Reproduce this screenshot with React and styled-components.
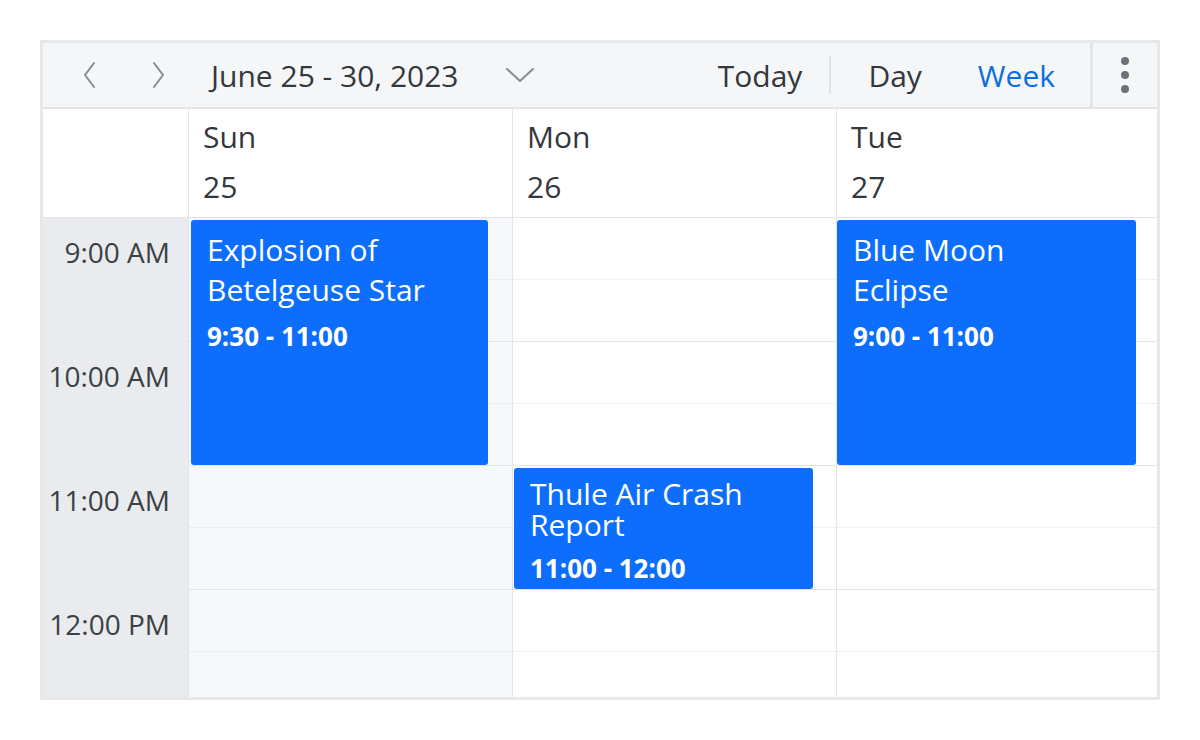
import styled, { createGlobalStyle } from 'styled-components'

const GlobalStyle = createGlobalStyle`
    body {
        margin: 0;
        background: #fff;
        font-family: 'Open Sans', 'Noto Sans', sans-serif;
        color: #34373c;
    }
`

const SLOT = 62
const LINE = '#e3e5e8'

const Page = styled.div`
    padding: 40px;
`

const Frame = styled.div`
    width: 1120px;
    height: 660px;
    box-sizing: border-box;
    border: 3px solid #e7e8ea;
    display: flex;
    flex-direction: column;
    overflow: hidden;
`

const Toolbar = styled.div`
    height: 64px;
    flex: none;
    display: flex;
    align-items: center;
    background: #f5f6f8;
    border-bottom: 2px solid ${LINE};
`

const NavGroup = styled.div`
    display: flex;
    align-items: center;
    gap: 42px;
    padding-left: 34px;
    height: 100%;
`

const IconButton = styled.div`
    display: flex;
    align-items: center;
    justify-content: center;
    width: 26px;
    height: 100%;
`

const DateText = styled.div`
    font-size: 30px;
    margin-left: 40px;
`

const Dropdown = styled.div`
    display: flex;
    align-items: center;
    margin-left: 46px;
`

const Spacer = styled.div`
    flex: 1;
`

const ViewButton = styled.div`
    font-size: 30px;
    padding: 0 ${p => p.$pr || 28}px 0 ${p => p.$pl || 28}px;
    color: ${p => (p.$active ? '#0a6fe3' : '#34373c')};
`

const Separator = styled.div`
    width: 2px;
    height: 38px;
    background: #e1e3e6;
`

const MenuArea = styled.div`
    width: 64px;
    height: 100%;
    border-left: 3px solid ${LINE};
    display: flex;
    align-items: center;
    justify-content: center;
`

const HeaderRow = styled.div`
    height: 108px;
    flex: none;
    display: grid;
    grid-template-columns: 145px 324px 324px 1fr;
    border-bottom: 1px solid ${LINE};
    background: #fff;
`

const Corner = styled.div``

const DayHead = styled.div`
    border-left: 1px solid ${LINE};
    padding: 3px 0 0 14px;
    font-size: 30px;
    line-height: 50px;
`

const Body = styled.div`
    flex: 1;
    display: grid;
    grid-template-columns: 145px 324px 324px 1fr;
    overflow: hidden;
`

const Gutter = styled.div`
    background: #e9ebee;
`

const TimeLabel = styled.div`
    height: ${SLOT * 2}px;
    box-sizing: border-box;
    padding: 3px 18px 0 0;
    line-height: ${SLOT}px;
    text-align: right;
    font-size: 28px;
    color: #3c4046;
`

const DayCol = styled.div`
    position: relative;
    border-left: 1px solid ${LINE};
    background: ${p => (p.$shaded ? '#f7f8fa' : '#fff')};
`

const Slot = styled.div`
    height: ${SLOT}px;
    box-sizing: border-box;
    border-bottom: 1px ${p => (p.$half ? 'dotted' : 'solid')} ${LINE};
`

const Event = styled.div`
    position: absolute;
    top: ${p => p.$start * SLOT + 2}px;
    left: ${p => p.$left}px;
    width: ${p => p.$width}px;
    height: ${p => p.$slots * SLOT - 3}px;
    box-sizing: border-box;
    background: #0d6efd;
    border-radius: 3px;
    color: #fff;
    padding: 10px 17px 10px 16px;
    overflow: hidden;
`

const EventTitle = styled.div`
    font-size: 30px;
    line-height: ${p => (p.$compact ? 31 : 40)}px;
`

const EventTime = styled.div`
    font-size: 26px;
    font-weight: 700;
    line-height: 32px;
    margin-top: ${p => (p.$compact ? 12 : 10)}px;
`

const Chevron = ({ dir }) => {
    const pts = {
        left: '12,2 3,14 12,26',
        right: '4,2 13,14 4,26',
        down: '2,3 15,15 28,3'
    }[dir]
    const down = dir === 'down'
    return (
        <svg width={down ? 30 : 16} height={down ? 18 : 28} viewBox={down ? '0 0 30 18' : '0 0 16 28'}>
            <polyline points={pts} fill="none" stroke="#868b92" strokeWidth="2" strokeLinecap="round" strokeLinejoin="round" />
        </svg>
    )
}

const Kebab = () => (
    <svg width="10" height="38" viewBox="0 0 10 38">
        <circle cx="5" cy="5" r="4" fill="#6b7079" />
        <circle cx="5" cy="19" r="4" fill="#6b7079" />
        <circle cx="5" cy="33" r="4" fill="#6b7079" />
    </svg>
)

const days = [
    { name: 'Sun', num: 25, shaded: true },
    { name: 'Mon', num: 26 },
    { name: 'Tue', num: 27 }
]

const hours = ['9:00 AM', '10:00 AM', '11:00 AM', '12:00 PM']

const events = [
    { day: 0, start: 0, slots: 4, left: 2, width: 297, lines: ['Explosion of', 'Betelgeuse Star'], time: '9:30 - 11:00' },
    { day: 1, start: 4, slots: 2, left: 1, width: 299, lines: ['Thule Air Crash', 'Report'], time: '11:00 - 12:00', compact: true },
    { day: 2, start: 0, slots: 4, left: 0, width: 299, lines: ['Blue Moon', 'Eclipse'], time: '9:00 - 11:00' }
]

export default function App() {
    return (
        <Page>
            <GlobalStyle />
            <Frame>
                <Toolbar>
                    <NavGroup>
                        <IconButton><Chevron dir="left" /></IconButton>
                        <IconButton><Chevron dir="right" /></IconButton>
                    </NavGroup>
                    <DateText>June 25 - 30, 2023</DateText>
                    <Dropdown><Chevron dir="down" /></Dropdown>
                    <Spacer />
                    <ViewButton $pr={27}>Today</ViewButton>
                    <Separator />
                    <ViewButton $pl={37}>Day</ViewButton>
                    <ViewButton $pr={35} $active>Week</ViewButton>
                    <MenuArea><Kebab /></MenuArea>
                </Toolbar>

                <HeaderRow>
                    <Corner />
                    {days.map(d => (
                        <DayHead key={d.name}>
                            <div>{d.name}</div>
                            <div>{d.num}</div>
                        </DayHead>
                    ))}
                </HeaderRow>

                <Body>
                    <Gutter>
                        {hours.map(h => (
                            <TimeLabel key={h}>{h}</TimeLabel>
                        ))}
                    </Gutter>
                    {days.map((d, di) => (
                        <DayCol key={d.name} $shaded={d.shaded}>
                            {Array.from({ length: 8 }).map((_, i) => (
                                <Slot key={i} $half={i % 2 === 0} />
                            ))}
                            {events
                                .filter(e => e.day === di)
                                .map(e => (
                                    <Event
                                        key={e.time}
                                        $start={e.start}
                                        $slots={e.slots}
                                        $left={e.left}
                                        $width={e.width}
                                    >
                                        <EventTitle $compact={e.compact}>
                                            {e.lines.map(l => (
                                                <div key={l}>{l}</div>
                                            ))}
                                        </EventTitle>
                                        <EventTime $compact={e.compact}>{e.time}</EventTime>
                                    </Event>
                                ))}
                        </DayCol>
                    ))}
                </Body>
            </Frame>
        </Page>
    )
}
